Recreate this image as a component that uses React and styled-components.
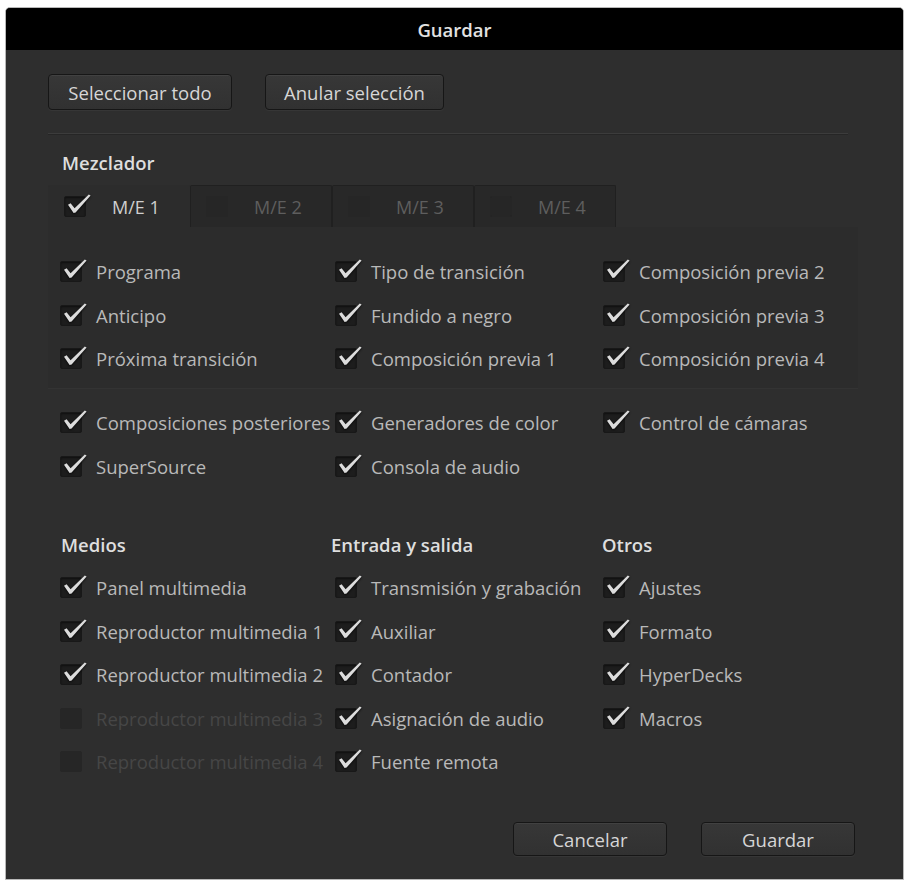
import React from 'react';
import styled, { createGlobalStyle } from 'styled-components';

const Global = createGlobalStyle`
  html, body { margin: 0; padding: 0; background: #ffffff; }
  body { font-family: "Open Sans", "Noto Sans", sans-serif; -webkit-font-smoothing: antialiased; }
  * { box-sizing: border-box; }
`;

const Page = styled.div`
  padding: 7px 5px 0 5px;
`;

const Dialog = styled.div`
  width: 899px;
  height: 873px;
  border: 1px solid #b8b8b8;
  border-radius: 5px 5px 0 0;
  background: #2e2e2e;
  display: flex;
  flex-direction: column;
  overflow: hidden;
`;

const TitleBar = styled.div`
  height: 42px;
  flex: none;
  background: #000;
  color: #e2e2e2;
  display: flex;
  align-items: center;
  justify-content: center;
  font-size: 18.5px;
  font-weight: 600;
`;

const Body = styled.div`
  flex: 1;
  display: flex;
  flex-direction: column;
  padding: 24px 45px 23px 42px;
`;

const ButtonRow = styled.div`
  display: flex;
  gap: ${p => p.$gap}px;
  justify-content: ${p => (p.$end ? 'flex-end' : 'flex-start')};
  padding-right: ${p => (p.$end ? 3 : 0)}px;
  margin-top: ${p => (p.$end ? 'auto' : '0')};
`;

const Button = styled.button`
  width: ${p => p.$w}px;
  height: ${p => p.$h || 36}px;
  border: 1px solid #161616;
  border-radius: 4px;
  background: linear-gradient(#373737, #313131);
  box-shadow: inset 0 1px 0 rgba(255, 255, 255, 0.05), 0 1px 0 rgba(255, 255, 255, 0.04);
  color: #d6d6d6;
  font-family: "Open Sans", "Noto Sans", sans-serif;
  font-size: 18.5px;
  padding: 0;
  cursor: pointer;
`;

const Separator = styled.div`
  margin-top: 23px;
  margin-right: 10px;
  height: 1px;
  background: #3c3c3c;
  box-shadow: 0 1px 0 #262626;
`;

const SectionTitle = styled.div`
  margin-top: 18px;
  padding-left: 14px;
  line-height: 22px;
  font-size: 18.5px;
  font-weight: 600;
  color: #dedede;
`;

const TabBar = styled.div`
  margin-top: 11px;
  height: 42px;
  display: flex;
`;

const Tab = styled.div`
  width: 142px;
  height: 42px;
  display: flex;
  align-items: center;
  padding-left: 15px;
  gap: 26px;
  font-size: 18px;
  color: ${p => (p.$active ? '#cfcfcf' : '#5e5e5e')};
  background: ${p => (p.$active ? '#2c2c2c' : '#282828')};
  border: 1px solid ${p => (p.$active ? '#2c2c2c' : '#202020')};
  border-bottom: none;
  border-radius: 2px 2px 0 0;
`;

const Panel = styled.div`
  background: #2c2c2c;
  padding: 23px 0 7.5px 12px;
  border-bottom: 1px solid #333;
`;

const Grid = styled.div`
  display: grid;
  grid-template-columns: 275px 268px 1fr;
  grid-auto-rows: 43.5px;
  margin-top: ${p => p.$mt || 0}px;
  padding-left: ${p => p.$pl || 0}px;
`;

const Columns = styled.div`
  display: grid;
  grid-template-columns: 275px 268px 1fr;
  margin-top: 34px;
  padding-left: 12px;
`;

const Column = styled.div`
  display: flex;
  flex-direction: column;
`;

const ColumnTitle = styled.div`
  height: 44px;
  display: flex;
  align-items: center;
  margin-left: ${p => p.$shift}px;
  font-size: 18.5px;
  font-weight: 600;
  color: #dedede;
`;

const Item = styled.div`
  height: 43.5px;
  display: flex;
  align-items: center;
  gap: 14px;
  font-size: 18.5px;
  color: ${p => (p.$disabled ? '#464646' : '#b9b9b9')};
  white-space: nowrap;
`;

const Box = styled.span`
  position: relative;
  flex: none;
  width: 22px;
  height: 21px;
  border-radius: 2px;
  background: ${p => (p.$dim ? '#262626' : '#1d1d1d')};
  border: 1px solid ${p => (p.$dim ? '#262626' : '#181818')};
  box-shadow: ${p => (p.$dim ? 'none' : 'inset 0 1px 2px rgba(0,0,0,0.5)')};
`;

const CheckSvg = styled.svg`
  position: absolute;
  left: -1px;
  top: -5px;
  overflow: visible;
  filter: drop-shadow(0 1px 1px rgba(0, 0, 0, 0.7));
  path { fill: #dcdcdc; }
`;

const CheckBox = ({ checked = true, dim = false }) => (
  <Box $dim={dim}>
    {checked && (
      <CheckSvg width="30" height="28" viewBox="0 0 30 28">
        <path d="M4 12.8 L6.6 11.2 L10.6 16.2 L24.8 2.4 L26.6 3.6 L11.6 20.6 L9.6 20.9 Z" />
      </CheckSvg>
    )}
  </Box>
);

const Check = ({ label, disabled }) => (
  <Item $disabled={disabled}>
    <CheckBox checked={!disabled} dim={disabled} />
    <span>{label}</span>
  </Item>
);

const panelItems = [
  'Programa', 'Tipo de transición', 'Composición previa 2',
  'Anticipo', 'Fundido a negro', 'Composición previa 3',
  'Próxima transición', 'Composición previa 1', 'Composición previa 4',
];

const extraItems = [
  'Composiciones posteriores', 'Generadores de color', 'Control de cámaras',
  'SuperSource', 'Consola de audio', null,
];

const groups = [
  {
    title: 'Medios',
    shift: 1,
    items: [
      ['Panel multimedia'],
      ['Reproductor multimedia 1'],
      ['Reproductor multimedia 2'],
      ['Reproductor multimedia 3', true],
      ['Reproductor multimedia 4', true],
    ],
  },
  {
    title: 'Entrada y salida',
    shift: -4,
    items: [
      ['Transmisión y grabación'],
      ['Auxiliar'],
      ['Contador'],
      ['Asignación de audio'],
      ['Fuente remota'],
    ],
  },
  {
    title: 'Otros',
    shift: -1,
    items: [['Ajustes'], ['Formato'], ['HyperDecks'], ['Macros']],
  },
];

const tabs = ['M/E 1', 'M/E 2', 'M/E 3', 'M/E 4'];

export default function App() {
  return (
    <>
      <Global />
      <Page>
        <Dialog>
          <TitleBar>Guardar</TitleBar>
          <Body>
            <ButtonRow $gap={33}>
              <Button $w={184}>Seleccionar todo</Button>
              <Button $w={179}>Anular selección</Button>
            </ButtonRow>
            <Separator />
            <SectionTitle>Mezclador</SectionTitle>
            <TabBar>
              {tabs.map((t, i) => (
                <Tab key={t} $active={i === 0}>
                  <CheckBox checked={i === 0} dim={i !== 0} />
                  <span>{t}</span>
                </Tab>
              ))}
            </TabBar>
            <Panel>
              <Grid>
                {panelItems.map(l => (
                  <Check key={l} label={l} />
                ))}
              </Grid>
            </Panel>
            <Grid $mt={12} $pl={12}>
              {extraItems.map((l, i) => (l ? <Check key={l} label={l} /> : <span key={i} />))}
            </Grid>
            <Columns>
              {groups.map(g => (
                <Column key={g.title}>
                  <ColumnTitle $shift={g.shift}>{g.title}</ColumnTitle>
                  {g.items.map(([l, d]) => (
                    <Check key={l} label={l} disabled={d} />
                  ))}
                </Column>
              ))}
            </Columns>
            <ButtonRow $gap={34} $end>
              <Button $w={154} $h={34}>Cancelar</Button>
              <Button $w={154} $h={34}>Guardar</Button>
            </ButtonRow>
          </Body>
        </Dialog>
      </Page>
    </>
  );
}
